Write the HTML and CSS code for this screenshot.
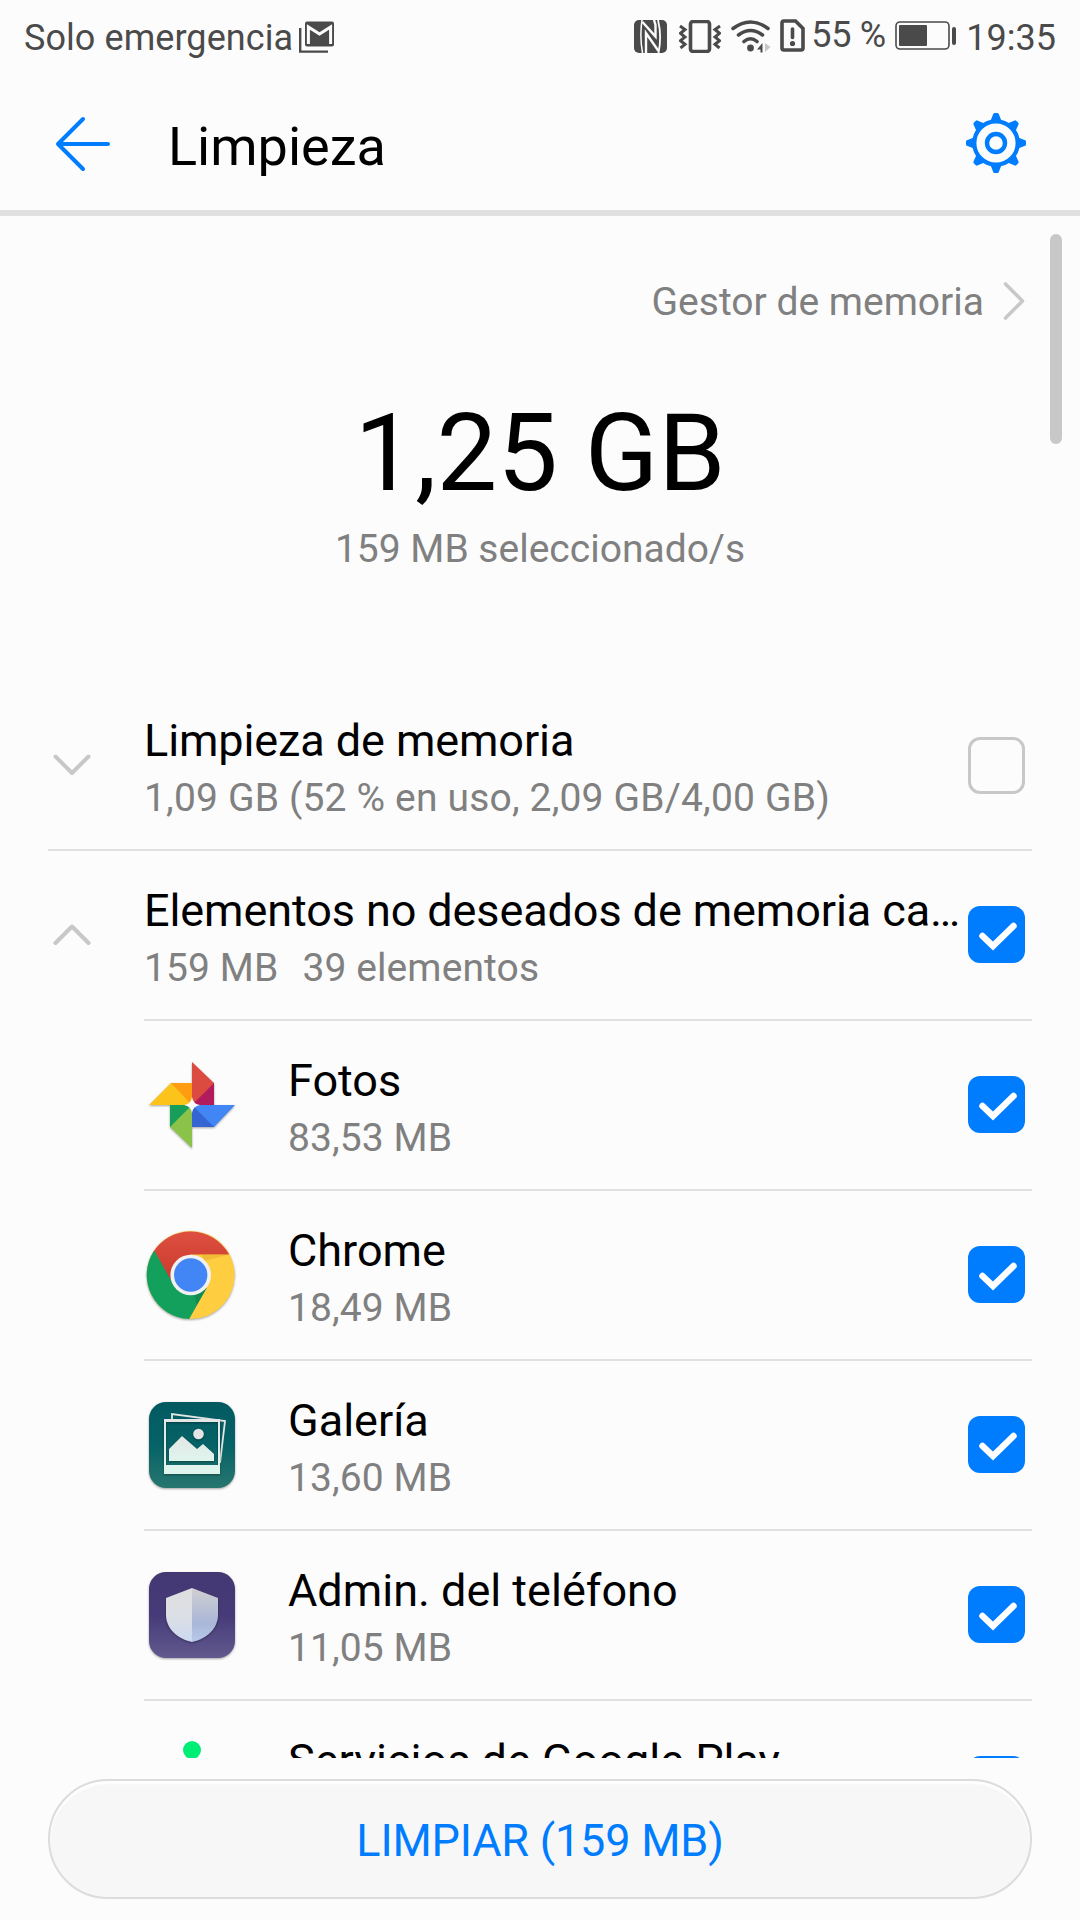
FILE: index.html
```html
<!DOCTYPE html>
<html lang="es">
<head>
  <meta charset="UTF-8">
  <title>Limpieza</title>
  <link rel="stylesheet" href="styles.css">
</head>
<body>
  <!-- barra de estado -->
  <div class="status">
    <span class="carrier">Solo emergencia</span>
    <svg class="mail" width="36" height="34" viewBox="0 0 36 34">
      <path d="M1.2 7v23.6H29" fill="none" stroke="#4a4a4a" stroke-width="2.4"/>
      <rect x="6" y="0.500" width="29" height="25" rx="2" fill="#4a4a4a"/>
      <path d="M9.400 23V6L20.500 13L31.600 6V23" fill="none" stroke="#fcfcfc" stroke-width="3"/>
    </svg>

    <div class="status-right">
      <svg class="nfc" width="33" height="33" viewBox="0 0 33 33">
        <rect width="33" height="33" rx="5" fill="#4a4a4a"/>
        <g fill="none" stroke="#fcfcfc">
          <path d="M8 0Q5.500 16 8.500 33" stroke-width="1.500"/>
          <path d="M8.500 2L21.500 16.500V5L20 0" stroke-width="2.400"/>
          <path d="M12 33V13L24.500 31" stroke-width="2.400"/>
          <path d="M24 0Q28 16 24.500 33" stroke-width="1.800"/>
        </g>
      </svg>
      <svg class="vibrate" width="42" height="33" viewBox="0 0 42 33" fill="none" stroke="#4a4a4a" stroke-width="3">
        <rect x="11.500" y="1.500" width="19" height="30" rx="2.500" stroke-width="3.6"/>
        <path d="M1 6l5 3.500-4.500 3.800 4.500 3.700-4.500 3.700 4.500 3.600L1.500 28M41 6l-5 3.500 4.500 3.800-4.500 3.700 4.500 3.700-4.500 3.600 4.500 3.700"/>
      </svg>
      <svg class="wifi" width="40" height="33" viewBox="0 0 40 33" fill="none" stroke="#4a4a4a" stroke-width="3.6" stroke-linecap="round">
        <path d="M2 8.500Q19.500-4.500 37 8.500M7.500 15Q19.500 6 31.500 15M13 21.500Q19.500 16 26 21.500"/>
        <circle cx="19.500" cy="28" r="3.4" fill="#4a4a4a" stroke="none"/>
        <path d="M31.500 23v9.500h-2v-3h-3.500z" fill="#4a4a4a" stroke="none"/>
        <path d="M34 23v9l5.500-5z" fill="#c8c8c8" stroke="none"/>
      </svg>
      <svg class="sim" width="25" height="33" viewBox="0 0 25 33">
        <path d="M4 2h11.500L23 9.500V29a2 2 0 0 1-2 2H4a2 2 0 0 1-2-2V4a2 2 0 0 1 2-2z" fill="none" stroke="#4a4a4a" stroke-width="3.6"/>
        <path d="M12.500 10v8.500" stroke="#4a4a4a" stroke-width="3.600" stroke-linecap="round"/>
        <circle cx="12.500" cy="24.500" r="2.600" fill="#4a4a4a"/>
      </svg>
      <span class="percent">55 %</span>
      <svg class="battery" width="62" height="30" viewBox="0 0 62 30">
        <rect x="1" y="1" width="53" height="27" rx="4" fill="none" stroke="#4a4a4a" stroke-width="1.6"/>
        <rect x="4" y="4" width="28" height="21" rx="1" fill="#4a4a4a"/>
        <rect x="57" y="6" width="4" height="18" rx="2" fill="#4a4a4a"/>
      </svg>
      <span class="clock">19:35</span>
    </div>
  </div>

  <header>
    <svg class="back" width="56" height="56" viewBox="0 0 56 56" fill="none" stroke="#007dff" stroke-width="4" stroke-linecap="round" stroke-linejoin="round">
      <path d="M28 3L3 28l25 25M3 28h50"/>
    </svg>
    <h1>Limpieza</h1>
    <svg class="gear" width="60" height="60" viewBox="-30 -30 60 60">
      <defs>
        <path id="tooth" d="M-5.500-22l2.500-6.500Q-2.600-30-1.500-30h3Q2.600-30 3-28.500L5.500-22z"/>
      </defs>
      <g fill="#007dff">
        <use href="#tooth"/>
        <use href="#tooth" transform="rotate(45)"/>
        <use href="#tooth" transform="rotate(90)"/>
        <use href="#tooth" transform="rotate(135)"/>
        <use href="#tooth" transform="rotate(180)"/>
        <use href="#tooth" transform="rotate(225)"/>
        <use href="#tooth" transform="rotate(270)"/>
        <use href="#tooth" transform="rotate(315)"/>
      </g>
      <circle r="21.700" fill="none" stroke="#007dff" stroke-width="4.200"/>
      <circle r="9" fill="none" stroke="#007dff" stroke-width="4.400"/>
    </svg>
  </header>

  <main>
    <div class="scrollbar"></div>
    <a class="manager">
      Gestor de memoria
      <svg width="22" height="40" viewBox="0 0 22 40" fill="none" stroke="#c8c8c8" stroke-width="3.600" stroke-linecap="round" stroke-linejoin="round">
        <path d="M2.500 2l17 17-17 17"/>
      </svg>
    </a>
    <div class="total">1,25 GB</div>
    <div class="selected">159 MB seleccionado/s</div>

    <div class="group">
      <svg class="arrow" width="38" height="24" viewBox="0 0 38 24"><path d="M2.500 3.500L19 20 35.500 3.500"/></svg>
      <div class="text">
        <div class="name">Limpieza de memoria</div>
        <div class="size usage">1,09 GB (52 % en uso, 2,09 GB/4,00 GB)</div>
      </div>
      <span class="check off"></span>
    </div>

    <div class="group open">
      <svg class="arrow" width="38" height="24" viewBox="0 0 38 24"><path d="M2.500 20L19 3.500 35.500 20"/></svg>
      <div class="text">
        <div class="name">Elementos no deseados de memoria caché</div>
        <div class="size"><span>159 MB</span><span>39 elementos</span></div>
      </div>
      <span class="check"><svg viewBox="0 0 57 57"><path d="M14.500 30L25 40 45.500 20"/></svg></span>
    </div>

    <div class="item">
      <svg class="icon" width="96" height="96" viewBox="-48 -48 96 96">
        <g class="shadow">
          <path d="M0 0V-43L22-22V0z" fill="#db4b3f"/>
          <path d="M0 0L22-22V0z" fill="#b01c5c"/>
          <path d="M0 0H-43L-21-22H0z" fill="#fcc41a"/>
          <path d="M0 0L-21-22H0z" fill="#fd9d0f"/>
          <path d="M0 0V43L-22 22V0z" fill="#8bc34a"/>
          <path d="M0 0L-22 22V0z" fill="#179e5b"/>
          <path d="M0 0H43L22 22H0z" fill="#4285f4"/>
          <path d="M0 0L22 22H0z" fill="#3565d3"/>
        </g>
        <path d="M0-8Q1-1 8 0Q1 1 0 8Q-1 1-8 0Q-1-1 0-8z" fill="#fff"/>
      </svg>
      <div class="text">
        <div class="name">Fotos</div>
        <div class="size">83,53 MB</div>
      </div>
      <span class="check"><svg viewBox="0 0 57 57"><path d="M14.500 30L25 40 45.500 20"/></svg></span>
    </div>

    <div class="item">
      <svg class="icon" width="96" height="96" viewBox="-46.700 -48 96 96">
        <defs>
          <linearGradient id="cr" x1="0" y1="0" x2="0" y2="1"><stop offset="0" stop-color="#dd4f41"/><stop offset="1" stop-color="#c9392d"/></linearGradient>
        </defs>
        <g class="shadow">
          <circle r="44" fill="#ffcd40"/>
          <path d="M-38-22A44 44 0 0 1 38.500-20.500H0L-18 8z" fill="url(#cr)"/>
          <path d="M-36.500-24.500A44 44 0 0 0-1.500 44L16 13 0 18-18 8z" fill="#12a05c"/>
        </g>
        <path d="M14-14L38-20.500H10z" fill="#e3a92e" opacity=".5"/>
        <path d="M16 13L6 30 3 18z" fill="#0a7a45" opacity=".5"/>
        <circle r="20.300" fill="#f1f1f1"/>
        <circle r="16.700" fill="#4285f4"/>
      </svg>
      <div class="text">
        <div class="name">Chrome</div>
        <div class="size">18,49 MB</div>
      </div>
      <span class="check"><svg viewBox="0 0 57 57"><path d="M14.500 30L25 40 45.500 20"/></svg></span>
    </div>

    <div class="item">
      <svg class="icon" width="96" height="96" viewBox="0 0 96 96">
        <defs>
          <linearGradient id="ga" x1="0" y1="0" x2="0" y2="1"><stop offset="0" stop-color="#025a60"/><stop offset=".5" stop-color="#066266"/><stop offset="1" stop-color="#27766f"/></linearGradient>
          <linearGradient id="gw" x1="0" y1="0" x2="0" y2="1"><stop offset="0" stop-color="#e4e6e6"/><stop offset="1" stop-color="#dff5ee"/></linearGradient>
        </defs>
        <rect class="shadow" x="5" y="5" width="86" height="86" rx="17" fill="url(#ga)"/>
        <path d="M28 22v-5l53 7-5 42" fill="none" stroke="#e4e6e6" stroke-width="1.800"/>
        <g class="shadow">
          <path fill-rule="evenodd" d="M20 22h56v55H20zM22 25v43h52V25z" fill="url(#gw)"/>
          <path d="M25 52l13-13 15 13 6-5 11 10v7H25z" fill="url(#gw)"/>
          <circle cx="54.500" cy="37" r="5.300" fill="#e4e6e6"/>
        </g>
      </svg>
      <div class="text">
        <div class="name">Galería</div>
        <div class="size">13,60 MB</div>
      </div>
      <span class="check"><svg viewBox="0 0 57 57"><path d="M14.500 30L25 40 45.500 20"/></svg></span>
    </div>

    <div class="item">
      <svg class="icon" width="96" height="96" viewBox="0 0 96 96">
        <defs>
          <linearGradient id="ad" x1="0" y1="0" x2="0" y2="1"><stop offset="0" stop-color="#443873"/><stop offset=".5" stop-color="#463b78"/><stop offset="1" stop-color="#62598f"/></linearGradient>
          <linearGradient id="sl" x1="0" y1="0" x2="0" y2="1"><stop offset="0" stop-color="#dedede"/><stop offset=".5" stop-color="#dcdfe5"/><stop offset="1" stop-color="#ccd9f2"/></linearGradient>
          <linearGradient id="sr" x1="0" y1="0" x2="0" y2="1"><stop offset="0" stop-color="#d0d0d2"/><stop offset=".65" stop-color="#a9b6d7"/><stop offset="1" stop-color="#b9c9ea"/></linearGradient>
        </defs>
        <rect class="shadow" x="5" y="5" width="86" height="86" rx="17" fill="url(#ad)"/>
        <g class="shadow">
          <path d="M48 21L22 31v17C22 61 33 72 48 75z" fill="url(#sl)"/>
          <path d="M48 21l26 10v17C74 61 63 72 48 75z" fill="url(#sr)"/>
        </g>
      </svg>
      <div class="text">
        <div class="name">Admin. del teléfono</div>
        <div class="size">11,05 MB</div>
      </div>
      <span class="check"><svg viewBox="0 0 57 57"><path d="M14.500 30L25 40 45.500 20"/></svg></span>
    </div>

    <div class="item">
      <svg class="icon" width="96" height="96" viewBox="0 0 96 96">
        <circle cx="48" cy="13" r="9" fill="#00ee76"/>
      </svg>
      <div class="text">
        <div class="name">Servicios de Google Play</div>
      </div>
      <span class="check"></span>
    </div>
  </main>

  <footer>
    <button>LIMPIAR (159 MB)</button>
  </footer>
</body>
</html>
```
FILE: styles.css
```css
* {
  box-sizing: border-box;
}

body {
  margin: 0;
  width: 1080px;
  height: 1920px;
  overflow: hidden;
  display: flex;
  flex-direction: column;
  background: #fcfcfc;
  color: #000;
  font-family: Roboto, "Noto Sans", sans-serif;
}

svg {
  display: block;
  flex: none;
}

/* barra de estado */
.status {
  height: 72px;
  display: flex;
  align-items: flex-start;
  padding: 0 24px 0 24px;
  font-size: 36px;
  line-height: 42px;
  color: #4a4a4a;
}

.carrier {
  margin-top: 17px;
  width: 275px;
  white-space: nowrap;
  letter-spacing: 0.07px;
}

.mail {
  margin-top: 21px;
}

.status-right {
  display: flex;
  align-items: flex-start;
  margin-left: auto;
}

.nfc, .vibrate, .wifi {
  margin-top: 20px;
}

.nfc {
  margin-right: 12px;
}

.vibrate {
  margin-right: 10px;
}

.wifi {
  margin-right: 9px;
}

.sim {
  margin-top: 19px;
  margin-right: 6px;
}

.percent {
  margin-top: 14px;
  width: 84px;
  white-space: nowrap;
  letter-spacing: -0.3px;
}

.battery {
  margin-top: 21px;
  margin-right: 9px;
}

.clock {
  margin-top: 17px;
}

/* cabecera */
header {
  height: 144px;
  display: flex;
  align-items: center;
  padding: 0 54px 0 55px;
  border-bottom: 6px solid #e0e0e0;
}

.back {
  margin-top: 6px;
}

h1 {
  margin: 11px auto 0 57px;
  font-size: 54px;
  line-height: 64px;
  font-weight: 400;
}

.gear {
  margin-top: 4px;
}

/* lista */
main {
  position: relative;
  height: 1542px;
  overflow: hidden;
}

.scrollbar {
  position: absolute;
  top: 18px;
  right: 18px;
  width: 12px;
  height: 210px;
  border-radius: 6px;
  background: #c8c8c8;
}

.manager {
  height: 170px;
  display: flex;
  align-items: center;
  justify-content: flex-end;
  gap: 19px;
  padding: 2px 55px 0 0;
  font-size: 39px;
  color: #808080;
}

.total {
  text-align: center;
  font-size: 108px;
  line-height: 126px;
  margin-top: 4px;
}

.selected {
  margin-top: 9px;
  height: 156px;
  text-align: center;
  font-size: 39px;
  line-height: 48px;
  color: #808080;
}

.group, .item {
  position: relative;
  height: 170px;
  margin: 0 48px;
  padding-right: 7px;
  display: flex;
  align-items: center;
  border-bottom: 2px solid #e0e0e0;
}

.group .arrow {
  margin: 0 53px 0 5px;
  fill: none;
  stroke: #c8c8c8;
  stroke-width: 4;
  stroke-linecap: round;
  stroke-linejoin: round;
}

.item, .open {
  padding-bottom: 3px;
  border-bottom: none;
}

.item {
  margin-left: 144px;
}

/* linea que empieza en el texto, no en la flecha */
.item::after, .open::after {
  content: "";
  position: absolute;
  left: 0;
  right: 0;
  bottom: 0;
  height: 2px;
  background: #e0e0e0;
}

.open::after {
  left: 96px;
}

.item .icon {
  margin-right: 48px;
}

.text {
  flex: 1;
  min-width: 0;
  min-height: 114px;
  padding-top: 5px;
}

.name {
  font-size: 45px;
  line-height: 56px;
  white-space: nowrap;
  overflow: hidden;
  text-overflow: ellipsis;
}

.group .name {
  letter-spacing: -0.1px;
}

.size {
  display: flex;
  gap: 24px;
  margin-top: 5px;
  font-size: 39px;
  line-height: 48px;
  letter-spacing: 0.1px;
  color: #808080;
  white-space: nowrap;
}

.usage {
  letter-spacing: 0.17px;
}

.check {
  flex: none;
  width: 57px;
  height: 57px;
  border-radius: 12px;
  background: #007dff;
}

.check.off {
  background: none;
  border: 3px solid #c8c8c8;
}

.check path {
  fill: none;
  stroke: #fff;
  stroke-width: 6.5;
  stroke-linecap: round;
}

.shadow {
  filter: drop-shadow(0 1.5px 1px rgba(0, 0, 0, .35));
}

/* boton inferior */
footer {
  padding: 21px 48px 0;
}

button {
  display: block;
  width: 984px;
  height: 120px;
  padding: 2px 0 0;
  border: 2px solid #dcdcdc;
  border-radius: 60px;
  background: #f7f7f7;
  box-shadow: inset 0 3px 2px #fff;
  font-family: inherit;
  font-size: 45px;
  letter-spacing: -0.2px;
  color: #007dff;
}
```
